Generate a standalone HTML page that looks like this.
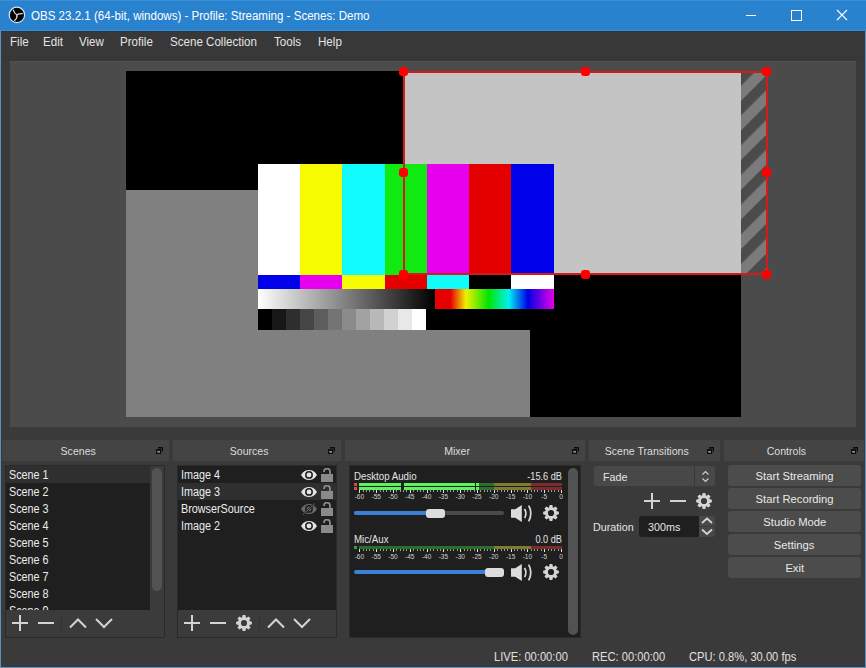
<!DOCTYPE html>
<html><head><meta charset="utf-8">
<style>
*{margin:0;padding:0;box-sizing:border-box}
html,body{width:866px;height:668px;overflow:hidden;background:#3a3a3a}
body{position:relative;font-family:"Liberation Sans",sans-serif;font-size:12px;color:#e6e6e6}
.a{position:absolute}
#client{left:1px;top:31px;width:864px;height:635px;background:#3a3a3a}
#title{left:31px;top:9px;color:#fff;font-size:12px;white-space:nowrap;transform:scaleX(.963);transform-origin:0 0}
.menu{top:35px;color:#e4e4e4;font-size:12px;white-space:nowrap;transform:scaleX(.965);transform-origin:0 0}
#preview{left:10px;top:61px;width:846px;height:366px;background:#4b4b4b}
.dt{top:440px;height:21px;background:#444;color:#dcdcdc;text-align:center;line-height:21px;font-size:11.5px;padding-right:15px;white-space:nowrap}
.dt span{display:inline-block;transform:scaleX(.92);position:relative;top:1px}
.fl{position:absolute;top:7px;right:6px;width:7px;height:7px}
.box{top:465px;height:173px;border:1px solid #2a2a2a;background:#3b3b3b}
.list{background:#1f1f1f}
.row{position:absolute;left:0;height:17px;line-height:17px;padding-left:3px;white-space:nowrap;color:#ececec}
.sel{background:#2f2f2f}
.t{display:inline-block;transform:scaleX(.9);transform-origin:0 50%;font-size:12px;position:relative;top:1px}
.btn{position:absolute;left:728px;width:133px;height:21px;background:#4c4c4c;border-radius:3px;text-align:center;line-height:21px;color:#e8e8e8;font-size:11.7px;white-space:nowrap}
.btn span{display:inline-block;transform:scaleX(.96)}
.tx{color:#e4e4e4;font-size:11.7px;white-space:nowrap;transform:scaleX(.92);transform-origin:0 0}
.mx{color:#e4e4e4;font-size:10px;white-space:nowrap;transform:scaleX(.97);transform-origin:0 0}
.mx.r{transform-origin:100% 0;transform:scaleX(.92)}
.r{text-align:right}
.num{width:30px;text-align:center;font-size:6.5px;line-height:7px;color:#cfcfcf}.num span{display:inline-block;transform:scaleX(1)}
.hd{width:9px;height:9px;background:#f00;border-radius:3px}
.status{top:650px;color:#e0e0e0;white-space:nowrap;font-size:12px;transform:scaleX(.93);transform-origin:0 0}
</style></head><body>
<svg width="0" height="0" style="position:absolute">
<defs>
<symbol id="gear" viewBox="0 0 16 16"><path fill="#d4d4d4" fill-rule="evenodd" d="M5.78 2.64 L6.07 2.53 L6.65 0.12 L9.35 0.12 L9.93 2.53 L10.22 2.64 L10.50 2.77 L12.62 1.47 L14.53 3.38 L13.23 5.50 L13.36 5.78 L13.47 6.07 L15.88 6.65 L15.88 9.35 L13.47 9.93 L13.36 10.22 L13.23 10.50 L14.53 12.62 L12.62 14.53 L10.50 13.23 L10.22 13.36 L9.93 13.47 L9.35 15.88 L6.65 15.88 L6.07 13.47 L5.78 13.36 L5.50 13.23 L3.38 14.53 L1.47 12.62 L2.77 10.50 L2.64 10.22 L2.53 9.93 L0.12 9.35 L0.12 6.65 L2.53 6.07 L2.64 5.78 L2.77 5.50 L1.47 3.38 L3.38 1.47 L5.50 2.77ZM11.10 8.00a3.1 3.1 0 1 0 -6.2 0a3.1 3.1 0 1 0 6.2 0Z"/></symbol>
<symbol id="eye" viewBox="0 0 16 10"><path fill="#e4e4e4" d="M0 5C2.5 1.2 5 0 8 0s5.5 1.2 8 5c-2.5 3.8-5 5-8 5S2.5 8.8 0 5z"/><circle cx="8" cy="4.9" r="3.2" fill="none" stroke="#1f1f1f" stroke-width="1.5"/></symbol>
<symbol id="eyeoff" viewBox="0 0 16 12"><path fill="#6a6a6a" d="M0 6C2.5 2.2 5 1 8 1s5.5 1.2 8 5c-2.5 3.8-5 5-8 5S2.5 9.8 0 6z"/><circle cx="8" cy="5.9" r="3.2" fill="none" stroke="#1f1f1f" stroke-width="1.5"/><path d="M2 11.5L14 .5" stroke="#1f1f1f" stroke-width="2"/><path d="M2 11.5L14 .5" stroke="#6a6a6a" stroke-width="1"/></symbol>
<symbol id="lock" viewBox="0 0 12 14"><rect x="0" y="6" width="12" height="8" fill="#8a8a8a"/><path d="M3 4V3.6a3 3 0 0 1 6 0V6.5" fill="none" stroke="#8a8a8a" stroke-width="1.8"/></symbol>
</defs></svg>
<div class="a" style="left:0;top:0;width:866px;height:31px;background:#2982ce"></div>
<div class="a" style="left:0;top:31px;width:1px;height:637px;background:#6a8eb0"></div>
<div class="a" style="left:1px;top:31px;width:1px;height:636px;background:#2c3c4c"></div>
<div class="a" style="left:865px;top:31px;width:1px;height:637px;background:#6a8eb0"></div>
<div class="a" style="left:864px;top:31px;width:1px;height:636px;background:#2c3c4c"></div>
<div class="a" style="left:0;top:667px;width:866px;height:1px;background:#6a8eb0"></div>
<div class="a" style="left:1px;top:666px;width:864px;height:1px;background:#283d50"></div>
<!-- title bar -->
<div class="a" style="left:0;top:0;width:866px;height:1px;background:#3a8fd8"></div>
<div class="a" style="left:0;top:30px;width:866px;height:1px;background:#3d8ccc"></div>
<div class="a" style="left:1px;top:31px;width:864px;height:1px;background:#263444"></div>
<div class="a" style="left:2px;top:32px;width:862px;height:29px;background:#383838"></div>
<div class="a" style="left:10px;top:61px;width:846px;height:1px;background:#515151;z-index:1"></div>
<svg class="a" style="left:6px;top:4px" width="22" height="22" viewBox="0 0 22 22">
<circle cx="10.9" cy="10.9" r="7.7" fill="#000" stroke="#cde4fa" stroke-width="1.2"/>
<path d="M10.9 10.9Q8.4 9.8 7.4 6.2M10.9 10.9Q13.2 9.4 16.3 9.6M10.9 10.9Q11.6 14 8.6 16.4" fill="none" stroke="#d8d8d8" stroke-width="1.3" stroke-linecap="round"/>
</svg>
<div class="a" id="title">OBS 23.2.1 (64-bit, windows) - Profile: Streaming - Scenes: Demo</div>
<svg class="a" style="left:740px;top:5px" width="120" height="22">
<line x1="6" y1="10.5" x2="16" y2="10.5" stroke="#fff" stroke-width="1"/>
<rect x="51.5" y="5.5" width="10" height="10" fill="none" stroke="#fff" stroke-width="1"/>
<path d="M97 5L107 15M107 5L97 15" stroke="#fff" stroke-width="1.1"/>
</svg>
<!-- menu -->
<div class="a menu" style="left:10px">File</div>
<div class="a menu" style="left:43px">Edit</div>
<div class="a menu" style="left:79px">View</div>
<div class="a menu" style="left:120px">Profile</div>
<div class="a menu" style="left:170px">Scene Collection</div>
<div class="a menu" style="left:274px">Tools</div>
<div class="a menu" style="left:318px">Help</div>

<!-- preview -->
<div class="a" id="preview"></div>
<div class="a" style="left:126px;top:71px;width:615px;height:346px;background:#808080"></div>
<div class="a" style="left:126px;top:71px;width:277px;height:119px;background:#000"></div>
<div class="a" style="left:530px;top:274px;width:211px;height:143px;background:#000"></div>
<div class="a" style="left:403px;top:71px;width:338px;height:203px;background:#c4c4c4"></div>


<!-- test pattern -->
<svg class="a" style="left:258px;top:164px" width="296" height="166" shape-rendering="crispEdges">
<defs>
<linearGradient id="gw" x1="0" x2="1"><stop offset="0" stop-color="#fff"/><stop offset="1" stop-color="#000"/></linearGradient>
<linearGradient id="rb" x1="0" x2="1">
<stop offset="0" stop-color="#e60000"/><stop offset=".13" stop-color="#e60000"/><stop offset=".26" stop-color="#f0f000"/><stop offset=".45" stop-color="#00e600"/><stop offset=".62" stop-color="#00f0f0"/><stop offset=".78" stop-color="#0000e6"/><stop offset="1" stop-color="#e600e6"/>
</linearGradient>
</defs>
<rect x="0" y="0" width="42" height="111" fill="#ffffff"/>
<rect x="42" y="0" width="42" height="111" fill="#f7fb02"/>
<rect x="84" y="0" width="43" height="111" fill="#10fcfc"/>
<rect x="127" y="0" width="42" height="111" fill="#10ea10"/>
<rect x="169" y="0" width="42" height="111" fill="#e600ee"/>
<rect x="211" y="0" width="42" height="111" fill="#e50000"/>
<rect x="253" y="0" width="43" height="111" fill="#0000ea"/>
<rect x="0" y="111" width="42" height="14" fill="#0000ea"/>
<rect x="42" y="111" width="42" height="14" fill="#e600ee"/>
<rect x="84" y="111" width="43" height="14" fill="#f7fb02"/>
<rect x="127" y="111" width="42" height="14" fill="#e50000"/>
<rect x="169" y="111" width="42" height="14" fill="#10fcfc"/>
<rect x="211" y="111" width="42" height="14" fill="#000"/>
<rect x="253" y="111" width="43" height="14" fill="#fff"/>
<rect x="0" y="125" width="177" height="20" fill="url(#gw)"/>
<rect x="177" y="125" width="119" height="20" fill="url(#rb)"/>
<rect x="177" y="145" width="119" height="21" fill="#000"/>
<rect x="0" y="145" width="14" height="21" fill="rgb(0,0,0)"/>
<rect x="14" y="145" width="14" height="21" fill="rgb(23,23,23)"/>
<rect x="28" y="145" width="14" height="21" fill="rgb(46,46,46)"/>
<rect x="42" y="145" width="14" height="21" fill="rgb(70,70,70)"/>
<rect x="56" y="145" width="14" height="21" fill="rgb(93,93,93)"/>
<rect x="70" y="145" width="14" height="21" fill="rgb(116,116,116)"/>
<rect x="84" y="145" width="14" height="21" fill="rgb(139,139,139)"/>
<rect x="98" y="145" width="14" height="21" fill="rgb(162,162,162)"/>
<rect x="112" y="145" width="14" height="21" fill="rgb(185,185,185)"/>
<rect x="126" y="145" width="14" height="21" fill="rgb(209,209,209)"/>
<rect x="140" y="145" width="14" height="21" fill="rgb(232,232,232)"/>
<rect x="154" y="145" width="14" height="21" fill="rgb(255,255,255)"/>
<rect x="168" y="145" width="9" height="21" fill="#000"/>
</svg>

<!-- stripes outside canvas -->
<svg class="a" style="left:741px;top:71px" width="25" height="203">
<defs><pattern id="st" width="21" height="21" patternUnits="userSpaceOnUse" patternTransform="rotate(45)"><rect width="21" height="21" fill="#7b7b7b"/><rect width="10.5" height="21" fill="#4b4b4b"/></pattern></defs>
<rect width="25" height="203" fill="url(#st)"/>
</svg>
<!-- selection -->
<div class="a" style="left:403px;top:71px;width:365px;height:204px;border:2px solid #d41a1a"></div>
<div class="a hd" style="left:399px;top:66.5px"></div>
<div class="a hd" style="left:580.5px;top:66.5px"></div>
<div class="a hd" style="left:762px;top:66.5px"></div>
<div class="a hd" style="left:399px;top:168px"></div>
<div class="a hd" style="left:762px;top:168px"></div>
<div class="a hd" style="left:399px;top:270px"></div>
<div class="a hd" style="left:580.5px;top:270px"></div>
<div class="a hd" style="left:762px;top:270px"></div>
<!-- docks -->
<div class="a dt" style="left:2px;width:167px"><span>Scenes</span><svg class="fl" viewBox="0 0 7 7"><path d="M2 0h5v4.5h-1.2V1.6H2z" fill="#0d0d0d"/><path d="M.6 3h4v3.4h-4z" fill="#8a8a8a" stroke="#0d0d0d" stroke-width="1.2"/><rect x="0" y="2.2" width="5.2" height="1.6" fill="#0d0d0d"/></svg></div>
<div class="a dt" style="left:173px;width:168px"><span>Sources</span><svg class="fl" viewBox="0 0 7 7"><path d="M2 0h5v4.5h-1.2V1.6H2z" fill="#0d0d0d"/><path d="M.6 3h4v3.4h-4z" fill="#8a8a8a" stroke="#0d0d0d" stroke-width="1.2"/><rect x="0" y="2.2" width="5.2" height="1.6" fill="#0d0d0d"/></svg></div>
<div class="a dt" style="left:345px;width:240px"><span>Mixer</span><svg class="fl" viewBox="0 0 7 7"><path d="M2 0h5v4.5h-1.2V1.6H2z" fill="#0d0d0d"/><path d="M.6 3h4v3.4h-4z" fill="#8a8a8a" stroke="#0d0d0d" stroke-width="1.2"/><rect x="0" y="2.2" width="5.2" height="1.6" fill="#0d0d0d"/></svg></div>
<div class="a dt" style="left:589px;width:131px"><span>Scene Transitions</span><svg class="fl" viewBox="0 0 7 7"><path d="M2 0h5v4.5h-1.2V1.6H2z" fill="#0d0d0d"/><path d="M.6 3h4v3.4h-4z" fill="#8a8a8a" stroke="#0d0d0d" stroke-width="1.2"/><rect x="0" y="2.2" width="5.2" height="1.6" fill="#0d0d0d"/></svg></div>
<div class="a dt" style="left:724px;width:140px"><span>Controls</span><svg class="fl" viewBox="0 0 7 7"><path d="M2 0h5v4.5h-1.2V1.6H2z" fill="#0d0d0d"/><path d="M.6 3h4v3.4h-4z" fill="#8a8a8a" stroke="#0d0d0d" stroke-width="1.2"/><rect x="0" y="2.2" width="5.2" height="1.6" fill="#0d0d0d"/></svg></div>
<div class="a box" style="left:5px;width:160px"></div>
<div class="a box" style="left:177px;width:160px"></div>
<div class="a box" style="left:349px;width:232px"></div>

<!-- scenes list -->
<div class="a list" style="left:6px;top:466px;width:144px;height:144px;overflow:hidden">
<div class="row sel" style="top:0;width:144px"><span class="t">Scene 1</span></div>
<div class="row" style="top:17px"><span class="t">Scene 2</span></div>
<div class="row" style="top:34px"><span class="t">Scene 3</span></div>
<div class="row" style="top:51px"><span class="t">Scene 4</span></div>
<div class="row" style="top:68px"><span class="t">Scene 5</span></div>
<div class="row" style="top:85px"><span class="t">Scene 6</span></div>
<div class="row" style="top:102px"><span class="t">Scene 7</span></div>
<div class="row" style="top:119px"><span class="t">Scene 8</span></div>
<div class="row" style="top:136px"><span class="t">Scene 9</span></div>
</div>
<div class="a" style="left:152px;top:468px;width:10px;height:123px;background:#525252;border-radius:5px"></div>
<svg class="a" style="left:6px;top:610px" width="158" height="27" fill="none" stroke="#d4d4d4" stroke-width="2">
<path d="M14 5v16M6 13h16"/>
<path d="M32 13h16"/>
<path d="M55.5 6v15" stroke="#333" stroke-width="1"/>
<path d="M64 17.5l8-8 8 8"/>
<path d="M90 9l8 8 8-8"/>
</svg>
<!-- sources list -->
<div class="a list" style="left:178px;top:466px;width:158px;height:144px;overflow:hidden">
<div class="row" style="top:0"><span class="t">Image 4</span></div>
<div class="row sel" style="top:17px;width:158px"><span class="t">Image 3</span></div>
<div class="row" style="top:34px"><span class="t">BrowserSource</span></div>
<div class="row" style="top:51px"><span class="t">Image 2</span></div>
</div>
<svg class="a" style="left:178px;top:610px" width="158" height="27" fill="none" stroke="#d4d4d4" stroke-width="2">
<path d="M14 5v16M6 13h16"/>
<path d="M32 13h16"/>
<use href="#gear" x="58" y="5" width="16" height="16" stroke="none"/>
<path d="M81.5 6v15" stroke="#333" stroke-width="1"/>
<path d="M90 17.5l8-8 8 8"/>
<path d="M116 9l8 8 8-8"/>
</svg>
<svg class="a" style="left:301px;top:470px" width="16" height="10"><use href="#eye" width="16" height="10"/></svg>
<svg class="a" style="left:321px;top:468px" width="12" height="14"><use href="#lock" width="12" height="14"/></svg>
<svg class="a" style="left:301px;top:487px" width="16" height="10"><use href="#eye" width="16" height="10"/></svg>
<svg class="a" style="left:321px;top:485px" width="12" height="14"><use href="#lock" width="12" height="14"/></svg>
<svg class="a" style="left:301px;top:503px" width="16" height="12"><use href="#eyeoff" width="16" height="12"/></svg>
<svg class="a" style="left:321px;top:502px" width="12" height="14"><use href="#lock" width="12" height="14"/></svg>
<svg class="a" style="left:301px;top:521px" width="16" height="10"><use href="#eye" width="16" height="10"/></svg>
<svg class="a" style="left:321px;top:519px" width="12" height="14"><use href="#lock" width="12" height="14"/></svg>

<!-- mixer -->
<div class="a list" style="left:350px;top:466px;width:230px;height:171px"></div>
<div class="a" style="left:568px;top:468px;width:10px;height:167px;background:#525252;border-radius:5px"></div>
<div class="a mx" style="left:354px;top:471px">Desktop Audio</div>
<div class="a mx r" style="left:482px;top:471px;width:80px">-15.6 dB</div>
<div class="a mx" style="left:354px;top:534px">Mic/Aux</div>
<div class="a mx r" style="left:482px;top:534px;width:80px">0.0 dB</div>

<svg class="a" style="left:353px;top:483px" width="212" height="12" shape-rendering="crispEdges"><rect x="1" y="0" width="3" height="3" fill="#d94a4a"/><rect x="1" y="4" width="3" height="3" fill="#d94a4a"/><rect x="6" y="0" width="42" height="3" fill="#5ff25f"/><rect x="6" y="4" width="42" height="3" fill="#5ff25f"/><rect x="51" y="0" width="71" height="3" fill="#5ff25f"/><rect x="51" y="4" width="71" height="3" fill="#5ff25f"/><rect x="123" y="0" width="3" height="3" fill="#5ff25f"/><rect x="123" y="4" width="3" height="3" fill="#5ff25f"/><rect x="126" y="0" width="15" height="3" fill="#2c6e2c"/><rect x="126" y="4" width="15" height="3" fill="#2c6e2c"/><rect x="141" y="0" width="37" height="3" fill="#7d7b30"/><rect x="141" y="4" width="37" height="3" fill="#7d7b30"/><rect x="178" y="0" width="31" height="3" fill="#7c2c2c"/><rect x="178" y="4" width="31" height="3" fill="#7c2c2c"/><rect x="6" y="7" width="1" height="3" fill="#e0e0e0"/><rect x="10" y="7" width="1" height="2" fill="#9a9a9a"/><rect x="13" y="7" width="1" height="2" fill="#9a9a9a"/><rect x="16" y="7" width="1" height="2" fill="#9a9a9a"/><rect x="20" y="7" width="1" height="2" fill="#9a9a9a"/><rect x="23" y="7" width="1" height="3" fill="#e0e0e0"/><rect x="27" y="7" width="1" height="2" fill="#9a9a9a"/><rect x="30" y="7" width="1" height="2" fill="#9a9a9a"/><rect x="33" y="7" width="1" height="2" fill="#9a9a9a"/><rect x="37" y="7" width="1" height="2" fill="#9a9a9a"/><rect x="40" y="7" width="1" height="3" fill="#e0e0e0"/><rect x="43" y="7" width="1" height="2" fill="#9a9a9a"/><rect x="47" y="7" width="1" height="2" fill="#9a9a9a"/><rect x="50" y="7" width="1" height="2" fill="#9a9a9a"/><rect x="53" y="7" width="1" height="2" fill="#9a9a9a"/><rect x="57" y="7" width="1" height="3" fill="#e0e0e0"/><rect x="60" y="7" width="1" height="2" fill="#9a9a9a"/><rect x="64" y="7" width="1" height="2" fill="#9a9a9a"/><rect x="67" y="7" width="1" height="2" fill="#9a9a9a"/><rect x="70" y="7" width="1" height="2" fill="#9a9a9a"/><rect x="74" y="7" width="1" height="3" fill="#e0e0e0"/><rect x="77" y="7" width="1" height="2" fill="#9a9a9a"/><rect x="80" y="7" width="1" height="2" fill="#9a9a9a"/><rect x="84" y="7" width="1" height="2" fill="#9a9a9a"/><rect x="87" y="7" width="1" height="2" fill="#9a9a9a"/><rect x="90" y="7" width="1" height="3" fill="#e0e0e0"/><rect x="94" y="7" width="1" height="2" fill="#9a9a9a"/><rect x="97" y="7" width="1" height="2" fill="#9a9a9a"/><rect x="100" y="7" width="1" height="2" fill="#9a9a9a"/><rect x="104" y="7" width="1" height="2" fill="#9a9a9a"/><rect x="107" y="7" width="1" height="3" fill="#e0e0e0"/><rect x="111" y="7" width="1" height="2" fill="#9a9a9a"/><rect x="114" y="7" width="1" height="2" fill="#9a9a9a"/><rect x="117" y="7" width="1" height="2" fill="#9a9a9a"/><rect x="121" y="7" width="1" height="2" fill="#9a9a9a"/><rect x="124" y="7" width="1" height="3" fill="#e0e0e0"/><rect x="127" y="7" width="1" height="2" fill="#9a9a9a"/><rect x="131" y="7" width="1" height="2" fill="#9a9a9a"/><rect x="134" y="7" width="1" height="2" fill="#9a9a9a"/><rect x="137" y="7" width="1" height="2" fill="#9a9a9a"/><rect x="141" y="7" width="1" height="3" fill="#e0e0e0"/><rect x="144" y="7" width="1" height="2" fill="#9a9a9a"/><rect x="148" y="7" width="1" height="2" fill="#9a9a9a"/><rect x="151" y="7" width="1" height="2" fill="#9a9a9a"/><rect x="154" y="7" width="1" height="2" fill="#9a9a9a"/><rect x="158" y="7" width="1" height="3" fill="#e0e0e0"/><rect x="161" y="7" width="1" height="2" fill="#9a9a9a"/><rect x="164" y="7" width="1" height="2" fill="#9a9a9a"/><rect x="168" y="7" width="1" height="2" fill="#9a9a9a"/><rect x="171" y="7" width="1" height="2" fill="#9a9a9a"/><rect x="174" y="7" width="1" height="3" fill="#e0e0e0"/><rect x="178" y="7" width="1" height="2" fill="#9a9a9a"/><rect x="181" y="7" width="1" height="2" fill="#9a9a9a"/><rect x="184" y="7" width="1" height="2" fill="#9a9a9a"/><rect x="188" y="7" width="1" height="2" fill="#9a9a9a"/><rect x="191" y="7" width="1" height="3" fill="#e0e0e0"/><rect x="195" y="7" width="1" height="2" fill="#9a9a9a"/><rect x="198" y="7" width="1" height="2" fill="#9a9a9a"/><rect x="201" y="7" width="1" height="2" fill="#9a9a9a"/><rect x="205" y="7" width="1" height="2" fill="#9a9a9a"/><rect x="208" y="7" width="1" height="3" fill="#e0e0e0"/></svg><svg class="a" style="left:353px;top:546px" width="212" height="12" shape-rendering="crispEdges"><rect x="1" y="0" width="3" height="3" fill="#3f9a3f"/><rect x="6" y="0" width="135" height="3" fill="#2c6e2c"/><rect x="141" y="0" width="37" height="3" fill="#7d7b30"/><rect x="178" y="0" width="31" height="3" fill="#7c2c2c"/><rect x="6" y="3" width="1" height="3" fill="#e0e0e0"/><rect x="10" y="3" width="1" height="2" fill="#9a9a9a"/><rect x="13" y="3" width="1" height="2" fill="#9a9a9a"/><rect x="16" y="3" width="1" height="2" fill="#9a9a9a"/><rect x="20" y="3" width="1" height="2" fill="#9a9a9a"/><rect x="23" y="3" width="1" height="3" fill="#e0e0e0"/><rect x="27" y="3" width="1" height="2" fill="#9a9a9a"/><rect x="30" y="3" width="1" height="2" fill="#9a9a9a"/><rect x="33" y="3" width="1" height="2" fill="#9a9a9a"/><rect x="37" y="3" width="1" height="2" fill="#9a9a9a"/><rect x="40" y="3" width="1" height="3" fill="#e0e0e0"/><rect x="43" y="3" width="1" height="2" fill="#9a9a9a"/><rect x="47" y="3" width="1" height="2" fill="#9a9a9a"/><rect x="50" y="3" width="1" height="2" fill="#9a9a9a"/><rect x="53" y="3" width="1" height="2" fill="#9a9a9a"/><rect x="57" y="3" width="1" height="3" fill="#e0e0e0"/><rect x="60" y="3" width="1" height="2" fill="#9a9a9a"/><rect x="64" y="3" width="1" height="2" fill="#9a9a9a"/><rect x="67" y="3" width="1" height="2" fill="#9a9a9a"/><rect x="70" y="3" width="1" height="2" fill="#9a9a9a"/><rect x="74" y="3" width="1" height="3" fill="#e0e0e0"/><rect x="77" y="3" width="1" height="2" fill="#9a9a9a"/><rect x="80" y="3" width="1" height="2" fill="#9a9a9a"/><rect x="84" y="3" width="1" height="2" fill="#9a9a9a"/><rect x="87" y="3" width="1" height="2" fill="#9a9a9a"/><rect x="90" y="3" width="1" height="3" fill="#e0e0e0"/><rect x="94" y="3" width="1" height="2" fill="#9a9a9a"/><rect x="97" y="3" width="1" height="2" fill="#9a9a9a"/><rect x="100" y="3" width="1" height="2" fill="#9a9a9a"/><rect x="104" y="3" width="1" height="2" fill="#9a9a9a"/><rect x="107" y="3" width="1" height="3" fill="#e0e0e0"/><rect x="111" y="3" width="1" height="2" fill="#9a9a9a"/><rect x="114" y="3" width="1" height="2" fill="#9a9a9a"/><rect x="117" y="3" width="1" height="2" fill="#9a9a9a"/><rect x="121" y="3" width="1" height="2" fill="#9a9a9a"/><rect x="124" y="3" width="1" height="3" fill="#e0e0e0"/><rect x="127" y="3" width="1" height="2" fill="#9a9a9a"/><rect x="131" y="3" width="1" height="2" fill="#9a9a9a"/><rect x="134" y="3" width="1" height="2" fill="#9a9a9a"/><rect x="137" y="3" width="1" height="2" fill="#9a9a9a"/><rect x="141" y="3" width="1" height="3" fill="#e0e0e0"/><rect x="144" y="3" width="1" height="2" fill="#9a9a9a"/><rect x="148" y="3" width="1" height="2" fill="#9a9a9a"/><rect x="151" y="3" width="1" height="2" fill="#9a9a9a"/><rect x="154" y="3" width="1" height="2" fill="#9a9a9a"/><rect x="158" y="3" width="1" height="3" fill="#e0e0e0"/><rect x="161" y="3" width="1" height="2" fill="#9a9a9a"/><rect x="164" y="3" width="1" height="2" fill="#9a9a9a"/><rect x="168" y="3" width="1" height="2" fill="#9a9a9a"/><rect x="171" y="3" width="1" height="2" fill="#9a9a9a"/><rect x="174" y="3" width="1" height="3" fill="#e0e0e0"/><rect x="178" y="3" width="1" height="2" fill="#9a9a9a"/><rect x="181" y="3" width="1" height="2" fill="#9a9a9a"/><rect x="184" y="3" width="1" height="2" fill="#9a9a9a"/><rect x="188" y="3" width="1" height="2" fill="#9a9a9a"/><rect x="191" y="3" width="1" height="3" fill="#e0e0e0"/><rect x="195" y="3" width="1" height="2" fill="#9a9a9a"/><rect x="198" y="3" width="1" height="2" fill="#9a9a9a"/><rect x="201" y="3" width="1" height="2" fill="#9a9a9a"/><rect x="205" y="3" width="1" height="2" fill="#9a9a9a"/><rect x="208" y="3" width="1" height="3" fill="#e0e0e0"/></svg><div class="a num" style="left:344.4px;top:493px"><span>-60</span></div><div class="a num" style="left:361.2px;top:493px"><span>-55</span></div><div class="a num" style="left:378.0px;top:493px"><span>-50</span></div><div class="a num" style="left:394.8px;top:493px"><span>-45</span></div><div class="a num" style="left:411.6px;top:493px"><span>-40</span></div><div class="a num" style="left:428.4px;top:493px"><span>-35</span></div><div class="a num" style="left:445.2px;top:493px"><span>-30</span></div><div class="a num" style="left:462.0px;top:493px"><span>-25</span></div><div class="a num" style="left:478.8px;top:493px"><span>-20</span></div><div class="a num" style="left:495.6px;top:493px"><span>-15</span></div><div class="a num" style="left:512.4px;top:493px"><span>-10</span></div><div class="a num" style="left:529.2px;top:493px"><span>-5</span></div><div class="a num" style="left:546.0px;top:493px"><span>0</span></div><div class="a num" style="left:344.4px;top:552.5px"><span>-60</span></div><div class="a num" style="left:361.2px;top:552.5px"><span>-55</span></div><div class="a num" style="left:378.0px;top:552.5px"><span>-50</span></div><div class="a num" style="left:394.8px;top:552.5px"><span>-45</span></div><div class="a num" style="left:411.6px;top:552.5px"><span>-40</span></div><div class="a num" style="left:428.4px;top:552.5px"><span>-35</span></div><div class="a num" style="left:445.2px;top:552.5px"><span>-30</span></div><div class="a num" style="left:462.0px;top:552.5px"><span>-25</span></div><div class="a num" style="left:478.8px;top:552.5px"><span>-20</span></div><div class="a num" style="left:495.6px;top:552.5px"><span>-15</span></div><div class="a num" style="left:512.4px;top:552.5px"><span>-10</span></div><div class="a num" style="left:529.2px;top:552.5px"><span>-5</span></div><div class="a num" style="left:546.0px;top:552.5px"><span>0</span></div>
<div class="a" style="left:354px;top:511px;width:150px;height:4px;background:#4a4a4a;border-radius:2px"></div>
<div class="a" style="left:354px;top:511px;width:80px;height:4px;background:#3b82d6;border-radius:2px"></div>
<div class="a" style="left:426px;top:508.5px;width:19px;height:9px;background:#dcdcdc;border-radius:3px"></div>
<div class="a" style="left:354px;top:570px;width:150px;height:4px;background:#3b82d6;border-radius:2px"></div>
<div class="a" style="left:485px;top:567.5px;width:19px;height:9px;background:#dcdcdc;border-radius:3px"></div>
<svg class="a" style="left:510px;top:505px" width="24" height="17" viewBox="0 0 24 17"><path d="M1 4.2h4.2L11.8 0v17L5.2 12.8H1z" fill="#dcdcdc"/><path d="M14.6 4c1.5 2.6 1.5 6.4 0 9M18.6 0.6c2.9 4.6 2.9 11.2 0 15.8" fill="none" stroke="#dcdcdc" stroke-width="1.7"/></svg>
<svg class="a" style="left:510px;top:564px" width="24" height="17" viewBox="0 0 24 17"><path d="M1 4.2h4.2L11.8 0v17L5.2 12.8H1z" fill="#dcdcdc"/><path d="M14.6 4c1.5 2.6 1.5 6.4 0 9M18.6 0.6c2.9 4.6 2.9 11.2 0 15.8" fill="none" stroke="#dcdcdc" stroke-width="1.7"/></svg>
<svg class="a" style="left:543px;top:505px" width="16" height="16"><use href="#gear" width="16" height="16"/></svg>
<svg class="a" style="left:543px;top:564px" width="16" height="16"><use href="#gear" width="16" height="16"/></svg>

<!-- scene transitions -->
<div class="a" style="left:594px;top:466px;width:121px;height:20px;background:#484848;border-radius:3px"></div>
<div class="a" style="left:694px;top:466px;width:1px;height:20px;background:#383838"></div>
<svg class="a" style="left:700px;top:469px" width="12" height="14" fill="none" stroke="#d2d2d2" stroke-width="1.1"><path d="M2.5 5.5l3-3 3 3M2.5 9.5l3 3 3-3"/></svg>
<div class="a tx" style="left:603px;top:470px">Fade</div>
<svg class="a" style="left:643px;top:493px" width="70" height="16" fill="none" stroke="#d4d4d4" stroke-width="2">
<path d="M9 0v16M1 8h16"/><path d="M27 8h16"/><use href="#gear" x="53" y="0" width="16" height="16" stroke="none"/>
</svg>
<div class="a tx" style="left:593px;top:520px">Duration</div>
<div class="a" style="left:639px;top:516px;width:61px;height:21px;background:#1f1f1f;border-radius:3px 0 0 3px"></div>
<div class="a" style="left:699px;top:516px;width:16px;height:21px;background:#484848;border-radius:0 3px 3px 0"></div>
<div class="a" style="left:699px;top:526px;width:16px;height:1px;background:#3a3a3a"></div>
<svg class="a" style="left:699px;top:516px" width="16" height="21" fill="none" stroke="#d4d4d4" stroke-width="1.8"><path d="M3 7l5-4.5 5 4.5M3 13.5l5 4.5 5-4.5"/></svg>
<div class="a tx" style="left:648px;top:520px">300ms</div>
<!-- controls -->
<div class="btn" style="top:465px"><span>Start Streaming</span></div>
<div class="btn" style="top:488px"><span>Start Recording</span></div>
<div class="btn" style="top:511px"><span>Studio Mode</span></div>
<div class="btn" style="top:534px"><span>Settings</span></div>
<div class="btn" style="top:557px"><span>Exit</span></div>
<!-- status -->
<div class="a status" style="left:494px">LIVE: 00:00:00</div>
<div class="a status" style="left:592px">REC: 00:00:00</div>
<div class="a status" style="left:689px">CPU: 0.8%, 30.00 fps</div>
</body></html>
